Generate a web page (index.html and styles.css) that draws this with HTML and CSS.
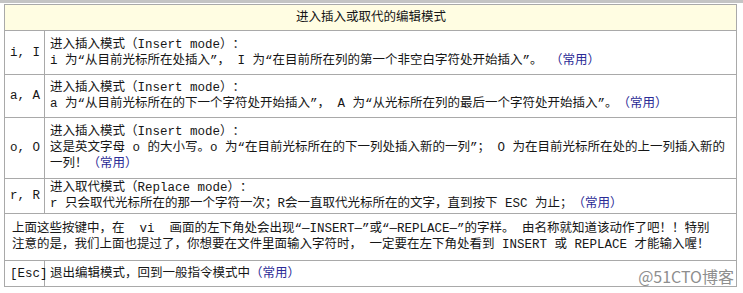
FILE: index.html
```html
<!DOCTYPE html>
<html lang="zh-CN">
<head>
<meta charset="utf-8">
<link rel="stylesheet" href="styles.css">
</head>
<body>
<div class="topbar"></div>
<div class="wrap">
<table class="modes">
  <colgroup><col class="c-key"><col></colgroup>
  <tr class="r-head"><th colspan="2">进入插入或取代的编辑模式</th></tr>
  <tr class="r-i">
    <td class="key">i, I</td>
    <td class="desc">进入插入模式（Insert mode）：<br>i 为“从目前光标所在处插入”， I 为“在目前所在列的第一个非空白字符处开始插入”。 <span class="common">（常用）</span></td>
  </tr>
  <tr class="r-a">
    <td class="key">a, A</td>
    <td class="desc">进入插入模式（Insert mode）：<br>a 为“从目前光标所在的下一个字符处开始插入”， A 为“从光标所在列的最后一个字符处开始插入”。<span class="common">（常用）</span></td>
  </tr>
  <tr class="r-o">
    <td class="key">o, O</td>
    <td class="desc">进入插入模式（Insert mode）：<br>这是英文字母 o 的大小写。o 为“在目前光标所在的下一列处插入新的一列”； O 为在目前光标所在处的上一列插入新的一列！<span class="common">（常用）</span></td>
  </tr>
  <tr class="r-r">
    <td class="key">r, R</td>
    <td class="desc">进入取代模式（Replace mode）：<br>r 只会取代光标所在的那一个字符一次；R会一直取代光标所在的文字，直到按下 ESC 为止；<span class="common">（常用）</span></td>
  </tr>
  <tr class="r-note">
    <td class="note" colspan="2">上面这些按键中，在 &nbsp;vi &nbsp;画面的左下角处会出现“—INSERT—”或“—REPLACE—”的字样。 由名称就知道该动作了吧！！特别<br>注意的是，我们上面也提过了，你想要在文件里面输入字符时， 一定要在左下角处看到 INSERT 或 REPLACE 才能输入喔！</td>
  </tr>
  <tr class="r-esc">
    <td class="key">[Esc]</td>
    <td class="desc">退出编辑模式，回到一般指令模式中<span class="common">（常用）</span></td>
  </tr>
</table>
<div class="watermark">@51CTO博客</div>
</div>
</body>
</html>
```
FILE: styles.css
```css
html, body {
  margin: 0;
  padding: 0;
  background: #ffffff;
}
body {
  font-family: "Liberation Mono", "Noto Sans CJK SC", monospace;
  font-size: 12.5px;
  line-height: 16px;
  color: #161616;
  text-spacing-trim: space-all;
  width: 743px;
  height: 293px;
  overflow: hidden;
}
.topbar {
  height: 3px;
  background: #c4c4c4;
}
.wrap {
  position: relative;
  padding: 1px 0 0 4px;
}
.modes {
  border-collapse: collapse;
  width: 733px;
  table-layout: fixed;
}
.c-key { width: 40px; }
.modes th, .modes td {
  border: 1px solid #a9a9a9;
  vertical-align: middle;
  padding: 0 4px 0 5px;
}
.modes th {
  background: #fffde2;
  font-weight: normal;
  text-align: center;
  height: 25px;
}
.modes .key {
  padding: 0 0 0 5px;
  white-space: nowrap;
}
.r-i td { height: 43px; }
.r-a td { height: 42px; }
.r-o td { height: 60px; }
.r-r td { height: 34px; }
.r-note td { height: 46px; }
.r-esc td { height: 25px; }
.modes .note { padding-left: 7px; }
.common { color: #2b2b96; }
.watermark {
  position: absolute;
  right: 9px;
  top: 263px;
  font-family: "Noto Sans CJK SC", "Noto Sans", sans-serif;
  font-size: 16px;
  line-height: 20px;
  color: #8e8e8e;
  background: #ffffff;
  padding-left: 2px;
}
```
